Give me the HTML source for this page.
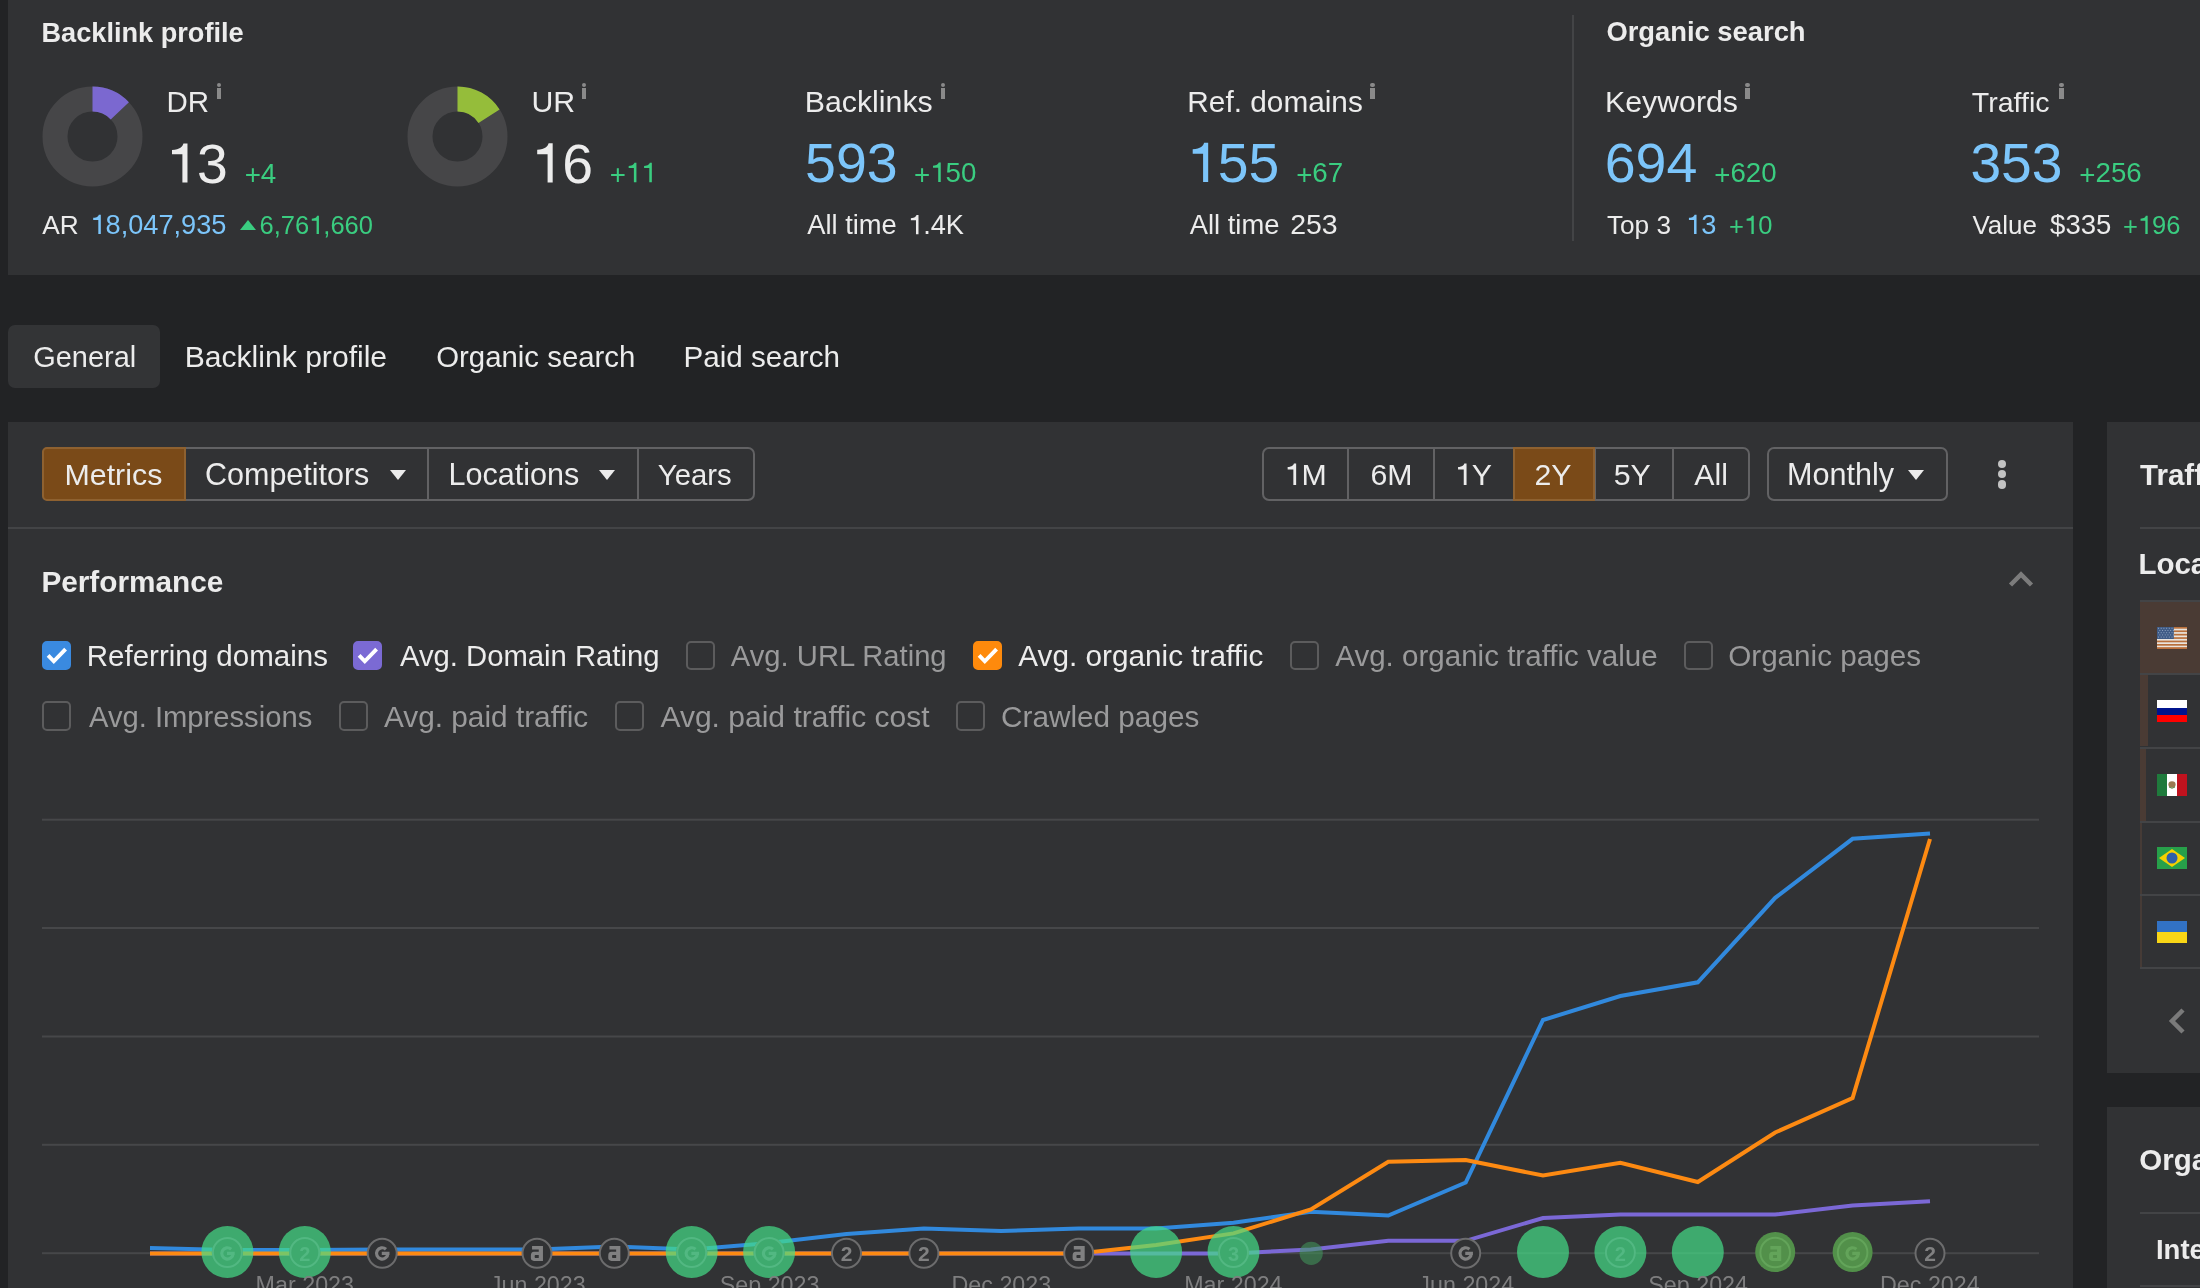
<!DOCTYPE html>
<html><head><meta charset="utf-8"><style>
*{box-sizing:border-box;margin:0;padding:0}
html,body{width:2200px;height:1288px;overflow:hidden;background:#222325;font-family:"Liberation Sans",sans-serif;color:#ebebeb}
.a{position:absolute}
.p{position:absolute;background:#313234}
.bd{position:absolute;border:2px solid #626264}
.cb{position:absolute;width:29px;height:29.5px;border:2px solid #5c5c5d;border-radius:5px}
.ln{position:absolute;background:#434446}
.tri{position:absolute;width:0;height:0;border-left:8.5px solid transparent;border-right:8.5px solid transparent;border-top:10.3px solid #ececec}
.inf{position:absolute;width:4.5px;background:#8a8a8a}
svg{position:absolute;left:0;top:0}
</style></head><body>
<div class="p" style="left:8px;top:0;width:2192px;height:275px"></div>
<div class="ln" style="left:1571.5px;top:15px;width:2px;height:226px"></div>
<div class="a" style="left:8px;top:325px;width:152px;height:63px;background:#333436;border-radius:7px"></div>
<div class="p" style="left:8px;top:422px;width:2065px;height:866px"></div>
<div class="p" style="left:2107px;top:422px;width:93px;height:651px"></div>
<div class="p" style="left:2107px;top:1107px;width:93px;height:181px"></div>
<svg style="left:41.5px;top:86px" width="101" height="101" viewBox="-50.5 -50.5 101 101">
  <circle r="37.5" fill="none" stroke="#464648" stroke-width="25"/>
  <path d="M0,-50 A50,50 0 0 1 36.4,-34.3 L18.2,-17.1 A25,25 0 0 0 0,-25 Z" fill="#7b68d0"/></svg>
<svg style="left:407px;top:86px" width="101" height="101" viewBox="-50.5 -50.5 101 101">
  <circle r="37.5" fill="none" stroke="#464648" stroke-width="25"/>
  <path d="M0,-50 A50,50 0 0 1 42.1,-27.0 L21.0,-13.5 A25,25 0 0 0 0,-25 Z" fill="#95bd3a"/></svg>
<div class="inf" style="left:216.6px;top:82.8px;height:4.5px;border-radius:50%"></div>
<div class="inf" style="left:216.6px;top:87.8px;height:11.3px"></div>
<div class="inf" style="left:581.8px;top:82.8px;height:4.5px;border-radius:50%"></div>
<div class="inf" style="left:581.8px;top:87.8px;height:11.3px"></div>
<div class="inf" style="left:940.7px;top:82.8px;height:4.5px;border-radius:50%"></div>
<div class="inf" style="left:940.7px;top:87.8px;height:11.3px"></div>
<div class="inf" style="left:1370.0px;top:82.8px;height:4.5px;border-radius:50%"></div>
<div class="inf" style="left:1370.0px;top:87.8px;height:11.3px"></div>
<div class="inf" style="left:1745.0px;top:82.8px;height:4.5px;border-radius:50%"></div>
<div class="inf" style="left:1745.0px;top:87.8px;height:11.3px"></div>
<div class="inf" style="left:2059.3px;top:82.8px;height:4.5px;border-radius:50%"></div>
<div class="inf" style="left:2059.3px;top:87.8px;height:11.3px"></div>
<div class="tri" style="left:240px;top:219.7px;border-top:none;border-bottom:10.3px solid #3acd80"></div>
<div class="bd" style="left:42px;top:447px;width:713px;height:54px;border-radius:7px"></div>
<div class="a" style="left:42px;top:447px;width:143.5px;height:54px;background:#7a4a18;border:2px solid #8e6130;border-radius:5px 0 0 5px"></div>
<div class="ln" style="left:426.7px;top:449px;width:2px;height:50px;background:#626264"></div>
<div class="ln" style="left:636.9px;top:449px;width:2px;height:50px;background:#626264"></div>
<div class="tri" style="left:389.5px;top:470.3px"></div>
<div class="tri" style="left:599px;top:470.3px"></div>
<div class="bd" style="left:1261.5px;top:447px;width:488px;height:54px;border-radius:7px"></div>
<div class="ln" style="left:1347px;top:449px;width:2px;height:50px;background:#626264"></div>
<div class="ln" style="left:1433.2px;top:449px;width:2px;height:50px;background:#626264"></div>
<div class="ln" style="left:1593.5px;top:449px;width:2px;height:50px;background:#626264"></div>
<div class="ln" style="left:1671.5px;top:449px;width:2px;height:50px;background:#626264"></div>
<div class="a" style="left:1513px;top:447px;width:81.5px;height:54px;background:#7a4a18;border:2px solid #8e6130"></div>
<div class="bd" style="left:1767px;top:447px;width:181px;height:54px;border-radius:7px"></div>
<div class="tri" style="left:1907.7px;top:470.3px"></div>
<div class="a" style="left:1997.8px;top:459.5px;width:8.6px;height:8.6px;border-radius:5px;background:#c2c2c2"></div>
<div class="a" style="left:1997.8px;top:469.8px;width:8.6px;height:8.6px;border-radius:5px;background:#c2c2c2"></div>
<div class="a" style="left:1997.8px;top:480.2px;width:8.6px;height:8.6px;border-radius:5px;background:#c2c2c2"></div>
<div class="ln" style="left:8px;top:526.5px;width:2065px;height:2px"></div>
<svg style="left:2004px;top:566px" width="34" height="24" viewBox="0 0 34 24"><path d="M6.5,19 L17,8.5 L27.5,19" fill="none" stroke="#7c7c7c" stroke-width="4.5"/></svg>
<div class="cb" style="left:42px;top:640.5px;background:#3a8ae0;border-color:#3a8ae0"></div>
<svg style="left:42px;top:640.5px" width="29" height="30" viewBox="0 0 29 30"><path d="M6.1,14.4 L11.8,20.3 L23.6,8.2" fill="none" stroke="#fff" stroke-width="3.9" stroke-linejoin="miter"/></svg>
<div class="cb" style="left:352.9px;top:640.5px;background:#7b6ad4;border-color:#7b6ad4"></div>
<svg style="left:352.9px;top:640.5px" width="29" height="30" viewBox="0 0 29 30"><path d="M6.1,14.4 L11.8,20.3 L23.6,8.2" fill="none" stroke="#fff" stroke-width="3.9" stroke-linejoin="miter"/></svg>
<div class="cb" style="left:685.5px;top:640.5px"></div>
<div class="cb" style="left:973px;top:640.5px;background:#fe8a0c;border-color:#fe8a0c"></div>
<svg style="left:973px;top:640.5px" width="29" height="30" viewBox="0 0 29 30"><path d="M6.1,14.4 L11.8,20.3 L23.6,8.2" fill="none" stroke="#fff" stroke-width="3.9" stroke-linejoin="miter"/></svg>
<div class="cb" style="left:1290px;top:640.5px"></div>
<div class="cb" style="left:1683.8px;top:640.5px"></div>
<div class="cb" style="left:42px;top:701.2px"></div>
<div class="cb" style="left:338.6px;top:701.2px"></div>
<div class="cb" style="left:615px;top:701.2px"></div>
<div class="cb" style="left:956.3px;top:701.2px"></div>
<div class="ln" style="left:2140px;top:526.5px;width:60px;height:2px"></div>
<div class="ln" style="left:2140px;top:600px;width:60px;height:2px"></div>
<div class="a" style="left:2140px;top:602px;width:60px;height:71px;background:#4a3b34"></div>
<div class="ln" style="left:2140px;top:673px;width:60px;height:2px"></div>
<div class="a" style="left:2140px;top:675px;width:8px;height:71px;background:#4a3b34"></div>
<div class="ln" style="left:2140px;top:746.5px;width:60px;height:2px"></div>
<div class="a" style="left:2140px;top:748.5px;width:6px;height:72px;background:#4a3b34"></div>
<div class="ln" style="left:2140px;top:820.5px;width:60px;height:2px"></div>
<div class="a" style="left:2140px;top:822.5px;width:2px;height:72px;background:#463b36"></div>
<div class="ln" style="left:2140px;top:893.5px;width:60px;height:2px"></div>
<div class="a" style="left:2140px;top:895.5px;width:2px;height:72px;background:#463b36"></div>
<div class="ln" style="left:2140px;top:967px;width:60px;height:2px"></div>
<svg style="left:2157px;top:627px" width="30" height="22" viewBox="0 0 30 22">
<rect width="30" height="22" fill="#b9703c"/>
<rect y="1.7" width="30" height="1.7" fill="#e9e4de"/><rect y="5.1" width="30" height="1.7" fill="#e9e4de"/><rect y="8.5" width="30" height="1.7" fill="#e9e4de"/><rect y="11.9" width="30" height="1.7" fill="#e9e4de"/><rect y="15.3" width="30" height="1.7" fill="#e9e4de"/><rect y="18.7" width="30" height="1.7" fill="#e9e4de"/>
<rect y="20.4" width="30" height="1.6" fill="#b9703c"/>
<rect width="16.8" height="12" fill="#3f5b86"/>
<g fill="#8fa3c0"><rect x="1.00" y="0.80" width="1" height="1"/><rect x="3.70" y="0.80" width="1" height="1"/><rect x="6.40" y="0.80" width="1" height="1"/><rect x="9.10" y="0.80" width="1" height="1"/><rect x="11.80" y="0.80" width="1" height="1"/><rect x="14.50" y="0.80" width="1" height="1"/><rect x="2.35" y="3.00" width="1" height="1"/><rect x="5.05" y="3.00" width="1" height="1"/><rect x="7.75" y="3.00" width="1" height="1"/><rect x="10.45" y="3.00" width="1" height="1"/><rect x="13.15" y="3.00" width="1" height="1"/><rect x="15.85" y="3.00" width="1" height="1"/><rect x="1.00" y="5.20" width="1" height="1"/><rect x="3.70" y="5.20" width="1" height="1"/><rect x="6.40" y="5.20" width="1" height="1"/><rect x="9.10" y="5.20" width="1" height="1"/><rect x="11.80" y="5.20" width="1" height="1"/><rect x="14.50" y="5.20" width="1" height="1"/><rect x="2.35" y="7.40" width="1" height="1"/><rect x="5.05" y="7.40" width="1" height="1"/><rect x="7.75" y="7.40" width="1" height="1"/><rect x="10.45" y="7.40" width="1" height="1"/><rect x="13.15" y="7.40" width="1" height="1"/><rect x="15.85" y="7.40" width="1" height="1"/><rect x="1.00" y="9.60" width="1" height="1"/><rect x="3.70" y="9.60" width="1" height="1"/><rect x="6.40" y="9.60" width="1" height="1"/><rect x="9.10" y="9.60" width="1" height="1"/><rect x="11.80" y="9.60" width="1" height="1"/><rect x="14.50" y="9.60" width="1" height="1"/></g>
</svg>
<svg style="left:2157px;top:700px" width="30" height="22" viewBox="0 0 30 22">
<rect width="30" height="8" fill="#fff"/><rect y="8" width="30" height="7" fill="#00148e"/><rect y="15" width="30" height="7" fill="#ff0000"/></svg>
<svg style="left:2157px;top:774px" width="30" height="22" viewBox="0 0 30 22">
<rect width="10" height="22" fill="#1f7a3c"/><rect x="10" width="10" height="22" fill="#fff"/><rect x="20" width="10" height="22" fill="#c0121e"/><ellipse cx="15" cy="10.5" rx="3.6" ry="3.2" fill="#9a7a52"/><path d="M12,13 Q15,15.5 18,13" fill="none" stroke="#5a8a4a" stroke-width="1"/></svg>
<svg style="left:2157px;top:847px" width="30" height="22" viewBox="0 0 30 22">
<rect width="30" height="22" fill="#27a04a"/><path d="M15,2 L28,11 L15,20 L2,11 Z" fill="#f5d000"/><circle cx="15" cy="11" r="5.5" fill="#2f5fa8"/></svg>
<svg style="left:2157px;top:921px" width="30" height="22" viewBox="0 0 30 22">
<rect width="30" height="11" fill="#3272c4"/><rect y="11" width="30" height="11" fill="#f9d616"/></svg>
<svg style="left:2164px;top:1004px" width="26" height="34" viewBox="0 0 26 34"><path d="M19,6 L8,17 L19,28" fill="none" stroke="#7a7a7a" stroke-width="4.5"/></svg>
<div class="ln" style="left:2140px;top:1211.5px;width:60px;height:2px"></div>
<div class="ln" style="left:2140px;top:1285px;width:60px;height:2px"></div>
<svg width="2200" height="1288" font-family="Liberation Sans" style="will-change:transform">
<rect x="42" y="818.7" width="1997" height="2" fill="#464749"/>
<rect x="42" y="927.0" width="1997" height="2" fill="#464749"/>
<rect x="42" y="1035.5" width="1997" height="2" fill="#464749"/>
<rect x="42" y="1143.8" width="1997" height="2" fill="#464749"/>
<rect x="42" y="1252.2" width="1997" height="2" fill="#464749"/>
<polyline points="150.0,1253.4 227.4,1253.4 304.8,1253.4 382.2,1253.4 459.6,1253.4 537.0,1253.4 614.3,1253.4 691.7,1253.4 769.1,1253.4 846.5,1253.4 923.9,1253.4 1001.3,1253.4 1078.7,1253.4 1156.1,1253.4 1233.5,1253.4 1310.9,1249.5 1388.3,1240.8 1465.7,1240.8 1543.0,1218.0 1620.4,1214.5 1697.8,1214.5 1775.2,1214.5 1852.6,1205.6 1930.0,1201.2" fill="none" stroke="#7b68d6" stroke-width="4" stroke-linejoin="miter"/>
<polyline points="150.0,1248.0 227.4,1250.0 304.8,1250.0 382.2,1249.5 459.6,1249.5 537.0,1249.5 614.3,1246.5 691.7,1249.5 769.1,1243.0 846.5,1234.0 923.9,1228.5 1001.3,1231.0 1078.7,1228.5 1156.1,1228.5 1233.5,1222.8 1310.9,1211.7 1388.3,1215.5 1465.7,1182.5 1543.0,1020.0 1620.4,996.0 1697.8,982.3 1775.2,897.8 1852.6,838.8 1930.0,833.4" fill="none" stroke="#3189dd" stroke-width="4" stroke-linejoin="miter"/>
<polyline points="150.0,1253.4 227.4,1253.4 304.8,1253.4 382.2,1253.4 459.6,1253.4 537.0,1253.4 614.3,1253.4 691.7,1253.4 769.1,1253.4 846.5,1253.4 923.9,1253.4 1001.3,1253.4 1078.7,1253.4 1156.1,1245.0 1233.5,1233.4 1310.9,1209.5 1388.3,1161.8 1465.7,1160.0 1543.0,1175.5 1620.4,1162.8 1697.8,1182.0 1775.2,1132.5 1852.6,1098.0 1930.0,839.0" fill="none" stroke="#fd8a12" stroke-width="4" stroke-linejoin="miter"/>
<circle cx="227.4" cy="1252" r="26" fill="#44dd87" fill-opacity="0.7"/>
<circle cx="227.4" cy="1252.5" r="15.6" fill="#3eaa6e"/>
<circle cx="227.4" cy="1252.5" r="14.5" fill="none" stroke="#52b882" stroke-width="2"/>
<path d="M231.17,1249.20 A5.65,5.65 0 1 0 233.04,1253.40 M226.99,1253.40 H234.69" fill="none" stroke="#52b882" stroke-width="3.2"/>
<circle cx="304.8" cy="1252" r="26" fill="#44dd87" fill-opacity="0.7"/>
<circle cx="304.8" cy="1252.5" r="15.6" fill="#3eaa6e"/>
<circle cx="304.8" cy="1252.5" r="14.5" fill="none" stroke="#52b882" stroke-width="2"/>
<text x="304.78" y="1261.00" text-anchor="middle" font-weight="700" font-size="20" fill="#52b882">2</text>
<circle cx="691.7" cy="1252" r="26" fill="#44dd87" fill-opacity="0.7"/>
<circle cx="691.7" cy="1252.5" r="15.6" fill="#3eaa6e"/>
<circle cx="691.7" cy="1252.5" r="14.5" fill="none" stroke="#52b882" stroke-width="2"/>
<path d="M695.52,1249.20 A5.65,5.65 0 1 0 697.39,1253.40 M691.34,1253.40 H699.04" fill="none" stroke="#52b882" stroke-width="3.2"/>
<circle cx="769.1" cy="1252" r="26" fill="#44dd87" fill-opacity="0.7"/>
<circle cx="769.1" cy="1252.5" r="15.6" fill="#3eaa6e"/>
<circle cx="769.1" cy="1252.5" r="14.5" fill="none" stroke="#52b882" stroke-width="2"/>
<path d="M772.91,1249.20 A5.65,5.65 0 1 0 774.78,1253.40 M768.73,1253.40 H776.43" fill="none" stroke="#52b882" stroke-width="3.2"/>
<circle cx="1156.1" cy="1252" r="26" fill="#44dd87" fill-opacity="0.7"/>
<circle cx="1233.5" cy="1252" r="26" fill="#44dd87" fill-opacity="0.7"/>
<circle cx="1233.5" cy="1252.5" r="15.6" fill="#3eaa6e"/>
<circle cx="1233.5" cy="1252.5" r="14.5" fill="none" stroke="#52b882" stroke-width="2"/>
<text x="1233.48" y="1261.00" text-anchor="middle" font-weight="700" font-size="20" fill="#52b882">3</text>
<circle cx="1543.0" cy="1252" r="26" fill="#44dd87" fill-opacity="0.7"/>
<circle cx="1620.4" cy="1252" r="26" fill="#44dd87" fill-opacity="0.7"/>
<circle cx="1620.4" cy="1252.5" r="15.6" fill="#3eaa6e"/>
<circle cx="1620.4" cy="1252.5" r="14.5" fill="none" stroke="#52b882" stroke-width="2"/>
<text x="1620.43" y="1261.00" text-anchor="middle" font-weight="700" font-size="20" fill="#52b882">2</text>
<circle cx="1697.8" cy="1252" r="26" fill="#44dd87" fill-opacity="0.7"/>
<circle cx="382.2" cy="1253.3" r="14.5" fill="#313234" stroke="#6c6c6d" stroke-width="2"/>
<path d="M385.95,1249.20 A5.65,5.65 0 1 0 387.82,1253.40 M381.77,1253.40 H389.47" fill="none" stroke="#808081" stroke-width="3.2"/>
<circle cx="537.0" cy="1253.3" r="14.5" fill="#313234" stroke="#6c6c6d" stroke-width="2"/>
<path transform="translate(536.96,1253.60)" fill="#808081" fill-rule="evenodd" d="M-4.9,-7.5 H6 V7.3 H1.8 V-4 H-4.9 Z M1.8,-1.8 H-3 C-5,-1.8 -6.1,-0.5 -6.1,2.3 V4.5 C-6.1,6.3 -5,7.3 -3,7.3 H1.8 Z M1.8,1.4 H-1.2 C-2,1.4 -2.3,1.9 -2.3,2.8 C-2.3,3.8 -2,4.3 -1.2,4.3 H1.8 Z"/>
<circle cx="614.3" cy="1253.3" r="14.5" fill="#313234" stroke="#6c6c6d" stroke-width="2"/>
<path transform="translate(614.35,1253.60)" fill="#808081" fill-rule="evenodd" d="M-4.9,-7.5 H6 V7.3 H1.8 V-4 H-4.9 Z M1.8,-1.8 H-3 C-5,-1.8 -6.1,-0.5 -6.1,2.3 V4.5 C-6.1,6.3 -5,7.3 -3,7.3 H1.8 Z M1.8,1.4 H-1.2 C-2,1.4 -2.3,1.9 -2.3,2.8 C-2.3,3.8 -2,4.3 -1.2,4.3 H1.8 Z"/>
<circle cx="846.5" cy="1253.3" r="14.5" fill="#313234" stroke="#6c6c6d" stroke-width="2"/>
<text x="846.52" y="1261.00" text-anchor="middle" font-weight="700" font-size="21" fill="#808081">2</text>
<circle cx="923.9" cy="1253.3" r="14.5" fill="#313234" stroke="#6c6c6d" stroke-width="2"/>
<text x="923.91" y="1261.00" text-anchor="middle" font-weight="700" font-size="21" fill="#808081">2</text>
<circle cx="1078.7" cy="1253.3" r="14.5" fill="#313234" stroke="#6c6c6d" stroke-width="2"/>
<path transform="translate(1078.70,1253.60)" fill="#808081" fill-rule="evenodd" d="M-4.9,-7.5 H6 V7.3 H1.8 V-4 H-4.9 Z M1.8,-1.8 H-3 C-5,-1.8 -6.1,-0.5 -6.1,2.3 V4.5 C-6.1,6.3 -5,7.3 -3,7.3 H1.8 Z M1.8,1.4 H-1.2 C-2,1.4 -2.3,1.9 -2.3,2.8 C-2.3,3.8 -2,4.3 -1.2,4.3 H1.8 Z"/>
<circle cx="1465.7" cy="1253.3" r="14.5" fill="#313234" stroke="#6c6c6d" stroke-width="2"/>
<path d="M1469.43,1249.20 A5.65,5.65 0 1 0 1471.30,1253.40 M1465.25,1253.40 H1472.95" fill="none" stroke="#808081" stroke-width="3.2"/>
<circle cx="1930.0" cy="1253.3" r="14.5" fill="#313234" stroke="#6c6c6d" stroke-width="2"/>
<text x="1930.00" y="1261.00" text-anchor="middle" font-weight="700" font-size="21" fill="#808081">2</text>
<circle cx="1775.2" cy="1252" r="20" fill="#52904a"/>
<circle cx="1775.2" cy="1252.5" r="14.8" fill="none" stroke="#63a45a" stroke-width="2"/>
<path transform="translate(1775.22,1253.60)" fill="#63a45a" fill-rule="evenodd" d="M-4.9,-7.5 H6 V7.3 H1.8 V-4 H-4.9 Z M1.8,-1.8 H-3 C-5,-1.8 -6.1,-0.5 -6.1,2.3 V4.5 C-6.1,6.3 -5,7.3 -3,7.3 H1.8 Z M1.8,1.4 H-1.2 C-2,1.4 -2.3,1.9 -2.3,2.8 C-2.3,3.8 -2,4.3 -1.2,4.3 H1.8 Z"/>
<circle cx="1852.6" cy="1252" r="20" fill="#52904a"/>
<circle cx="1852.6" cy="1252.5" r="14.8" fill="none" stroke="#63a45a" stroke-width="2"/>
<path d="M1856.39,1249.20 A5.65,5.65 0 1 0 1858.26,1253.40 M1852.21,1253.40 H1859.91" fill="none" stroke="#63a45a" stroke-width="3.2"/>
<circle cx="1311.2" cy="1253.3" r="11.6" fill="#429a5d" fill-opacity="0.55"/>
<text x="41.48" y="41.90" font-size="27.17" font-weight="700" fill="#ececec">Backlink profile</text>
<text x="1606.38" y="41.40" font-size="27.36" font-weight="700" fill="#ececec">Organic search</text>
<text x="166.38" y="112.20" font-size="29.49" fill="#ececec">DR</text>
<text x="531.46" y="112.20" font-size="30.28" fill="#ececec">UR</text>
<text x="804.82" y="112.00" font-size="30.28" fill="#ececec">Backlinks</text>
<text x="1187.36" y="112.00" font-size="29.79" fill="#ececec">Ref. domains</text>
<text x="1605.01" y="111.60" font-size="30.31" fill="#ececec">Keywords</text>
<text x="1971.86" y="111.60" font-size="28.55" fill="#ececec">Traffic</text>
<text x="166.30" y="182.60" font-size="55.30" fill="#ececec"> 3</text><path transform="translate(166.30,182.60) scale(55.300)" d="M0.291,0 H0.383 V-0.708 H0.310 C0.295,-0.655 0.250,-0.600 0.103,-0.590 V-0.512 H0.291 Z" fill="#ececec"/>
<text x="531.50" y="182.50" font-size="55.30" fill="#ececec"> 6</text><path transform="translate(531.50,182.50) scale(55.300)" d="M0.291,0 H0.383 V-0.708 H0.310 C0.295,-0.655 0.250,-0.600 0.103,-0.590 V-0.512 H0.291 Z" fill="#ececec"/>
<text x="805.08" y="182.00" font-size="55.54" fill="#7cc5fa">593</text>
<text x="1187.00" y="182.00" font-size="55.30" fill="#7cc5fa"> 55</text><path transform="translate(1187.00,182.00) scale(55.300)" d="M0.291,0 H0.383 V-0.708 H0.310 C0.295,-0.655 0.250,-0.600 0.103,-0.590 V-0.512 H0.291 Z" fill="#7cc5fa"/>
<text x="1604.68" y="182.00" font-size="55.53" fill="#7cc5fa">694</text>
<text x="1970.40" y="182.00" font-size="55.16" fill="#7cc5fa">353</text>
<text x="244.64" y="182.60" font-size="27.78" fill="#3acd80"><tspan dy="1.67">+</tspan><tspan dy="-1.67">4</tspan></text>
<text x="609.65" y="182.30" font-size="27.70" fill="#3acd80"><tspan dy="1.66">+</tspan><tspan dy="-1.66">  </tspan></text><path transform="translate(625.82,182.30) scale(27.700)" d="M0.291,0 H0.383 V-0.708 H0.310 C0.295,-0.655 0.250,-0.600 0.103,-0.590 V-0.512 H0.291 Z" fill="#3acd80"/><path transform="translate(641.23,182.30) scale(27.700)" d="M0.291,0 H0.383 V-0.708 H0.310 C0.295,-0.655 0.250,-0.600 0.103,-0.590 V-0.512 H0.291 Z" fill="#3acd80"/>
<text x="913.97" y="182.00" font-size="27.70" fill="#3acd80"><tspan dy="1.66">+</tspan><tspan dy="-1.66"> 50</tspan></text><path transform="translate(930.14,182.00) scale(27.700)" d="M0.291,0 H0.383 V-0.708 H0.310 C0.295,-0.655 0.250,-0.600 0.103,-0.590 V-0.512 H0.291 Z" fill="#3acd80"/>
<text x="1296.15" y="182.00" font-size="27.74" fill="#3acd80"><tspan dy="1.66">+</tspan><tspan dy="-1.66">67</tspan></text>
<text x="1714.35" y="182.00" font-size="27.63" fill="#3acd80"><tspan dy="1.66">+</tspan><tspan dy="-1.66">620</tspan></text>
<text x="2079.35" y="182.00" font-size="27.69" fill="#3acd80"><tspan dy="1.66">+</tspan><tspan dy="-1.66">256</tspan></text>
<text x="42.25" y="233.90" font-size="26.25" fill="#ececec">AR</text>
<text x="90.40" y="233.90" font-size="27.20" fill="#7cc5fa"> 8,047,935</text><path transform="translate(90.40,233.90) scale(27.200)" d="M0.291,0 H0.383 V-0.708 H0.310 C0.295,-0.655 0.250,-0.600 0.103,-0.590 V-0.512 H0.291 Z" fill="#7cc5fa"/>
<text x="259.53" y="233.90" font-size="25.50" fill="#3acd80">6,76 ,660</text><path transform="translate(309.16,233.90) scale(25.500)" d="M0.291,0 H0.383 V-0.708 H0.310 C0.295,-0.655 0.250,-0.600 0.103,-0.590 V-0.512 H0.291 Z" fill="#3acd80"/>
<text x="807.25" y="234.20" font-size="27.32" fill="#ececec">All time</text>
<text x="908.07" y="234.20" font-size="27.20" fill="#ececec"> .4K</text><path transform="translate(908.07,234.20) scale(27.200)" d="M0.291,0 H0.383 V-0.708 H0.310 C0.295,-0.655 0.250,-0.600 0.103,-0.590 V-0.512 H0.291 Z" fill="#ececec"/>
<text x="1189.75" y="234.20" font-size="27.35" fill="#ececec">All time</text>
<text x="1290.17" y="234.20" font-size="28.46" fill="#ececec">253</text>
<text x="1606.91" y="233.90" font-size="26.22" fill="#ececec">Top 3</text>
<text x="1686.12" y="233.90" font-size="27.20" fill="#7cc5fa"> 3</text><path transform="translate(1686.12,233.90) scale(27.200)" d="M0.291,0 H0.383 V-0.708 H0.310 C0.295,-0.655 0.250,-0.600 0.103,-0.590 V-0.512 H0.291 Z" fill="#7cc5fa"/>
<text x="1729.10" y="233.90" font-size="25.50" fill="#3acd80"><tspan dy="1.53">+</tspan><tspan dy="-1.53"> 0</tspan></text><path transform="translate(1743.99,233.90) scale(25.500)" d="M0.291,0 H0.383 V-0.708 H0.310 C0.295,-0.655 0.250,-0.600 0.103,-0.590 V-0.512 H0.291 Z" fill="#3acd80"/>
<text x="1972.39" y="233.90" font-size="25.99" fill="#ececec">Value</text>
<text x="2050.10" y="233.90" font-size="27.53" fill="#ececec">$335</text>
<text x="2123.02" y="233.90" font-size="25.50" fill="#3acd80"><tspan dy="1.53">+</tspan><tspan dy="-1.53"> 96</tspan></text><path transform="translate(2137.91,233.90) scale(25.500)" d="M0.291,0 H0.383 V-0.708 H0.310 C0.295,-0.655 0.250,-0.600 0.103,-0.590 V-0.512 H0.291 Z" fill="#3acd80"/>
<text x="33.24" y="367.10" font-size="28.95" fill="#ececec">General</text>
<text x="184.73" y="367.10" font-size="30.10" fill="#ececec">Backlink profile</text>
<text x="436.21" y="367.10" font-size="29.39" fill="#ececec">Organic search</text>
<text x="683.57" y="367.10" font-size="29.61" fill="#ececec">Paid search</text>
<text x="64.51" y="485.00" font-size="30.36" fill="#ececec">Metrics</text>
<text x="205.05" y="485.00" font-size="30.47" fill="#ececec">Competitors</text>
<text x="448.49" y="485.00" font-size="30.56" fill="#ececec">Locations</text>
<text x="657.79" y="485.00" font-size="29.30" fill="#ececec">Years</text>
<text x="1284.54" y="485.00" font-size="30.30" fill="#ececec"> M</text><path transform="translate(1284.54,485.00) scale(30.300)" d="M0.291,0 H0.383 V-0.708 H0.310 C0.295,-0.655 0.250,-0.600 0.103,-0.590 V-0.512 H0.291 Z" fill="#ececec"/>
<text x="1370.53" y="485.00" font-size="30.30" fill="#ececec">6M</text>
<text x="1454.94" y="485.00" font-size="30.30" fill="#ececec"> Y</text><path transform="translate(1454.94,485.00) scale(30.300)" d="M0.291,0 H0.383 V-0.708 H0.310 C0.295,-0.655 0.250,-0.600 0.103,-0.590 V-0.512 H0.291 Z" fill="#ececec"/>
<text x="1534.44" y="485.00" font-size="30.30" fill="#ececec">2Y</text>
<text x="1613.70" y="485.00" font-size="30.30" fill="#ececec">5Y</text>
<text x="1694.35" y="485.00" font-size="30.30" fill="#ececec">All</text>
<text x="1786.99" y="485.00" font-size="30.58" fill="#ececec">Monthly</text>
<text x="41.41" y="591.80" font-size="29.75" font-weight="700" fill="#ececec">Performance</text>
<text x="86.78" y="666.30" font-size="29.53" fill="#ececec">Referring domains</text>
<text x="399.94" y="666.30" font-size="29.25" fill="#ececec">Avg. Domain Rating</text>
<text x="730.84" y="666.30" font-size="29.20" fill="#9a9a9b">Avg. URL Rating</text>
<text x="1018.34" y="666.30" font-size="29.72" fill="#ececec">Avg. organic traffic</text>
<text x="1335.24" y="666.30" font-size="29.55" fill="#9a9a9b">Avg. organic traffic value</text>
<text x="1728.20" y="666.30" font-size="29.66" fill="#9a9a9b">Organic pages</text>
<text x="88.94" y="726.80" font-size="29.20" fill="#9a9a9b">Avg. Impressions</text>
<text x="383.94" y="726.80" font-size="29.81" fill="#9a9a9b">Avg. paid traffic</text>
<text x="660.44" y="726.80" font-size="30.02" fill="#9a9a9b">Avg. paid traffic cost</text>
<text x="1001.09" y="726.80" font-size="29.73" fill="#9a9a9b">Crawled pages</text>
<text x="2140.07" y="484.70" font-size="29.50" font-weight="700" fill="#ececec">Traffic by location</text>
<text x="2138.43" y="573.60" font-size="29.50" font-weight="700" fill="#ececec">Locations</text>
<text x="2139.29" y="1170.00" font-size="29.50" font-weight="700" fill="#ececec">Organic competitors</text>
<text x="2155.96" y="1259.00" font-size="27.50" font-weight="700" fill="#ececec">Intersect</text>
<text x="255.62" y="1293.20" font-size="23.30" fill="#7e7e7f">Mar 2023</text>
<text x="489.85" y="1293.20" font-size="23.30" fill="#7e7e7f">Jun 2023</text>
<text x="719.73" y="1293.20" font-size="23.30" fill="#7e7e7f">Sep 2023</text>
<text x="951.49" y="1293.20" font-size="23.30" fill="#7e7e7f">Dec 2023</text>
<text x="1184.15" y="1293.20" font-size="23.30" fill="#7e7e7f">Mar 2024</text>
<text x="1418.37" y="1293.20" font-size="23.30" fill="#7e7e7f">Jun 2024</text>
<text x="1648.26" y="1293.20" font-size="23.30" fill="#7e7e7f">Sep 2024</text>
<text x="1880.01" y="1293.20" font-size="23.30" fill="#7e7e7f">Dec 2024</text>
</svg>
</body></html>
